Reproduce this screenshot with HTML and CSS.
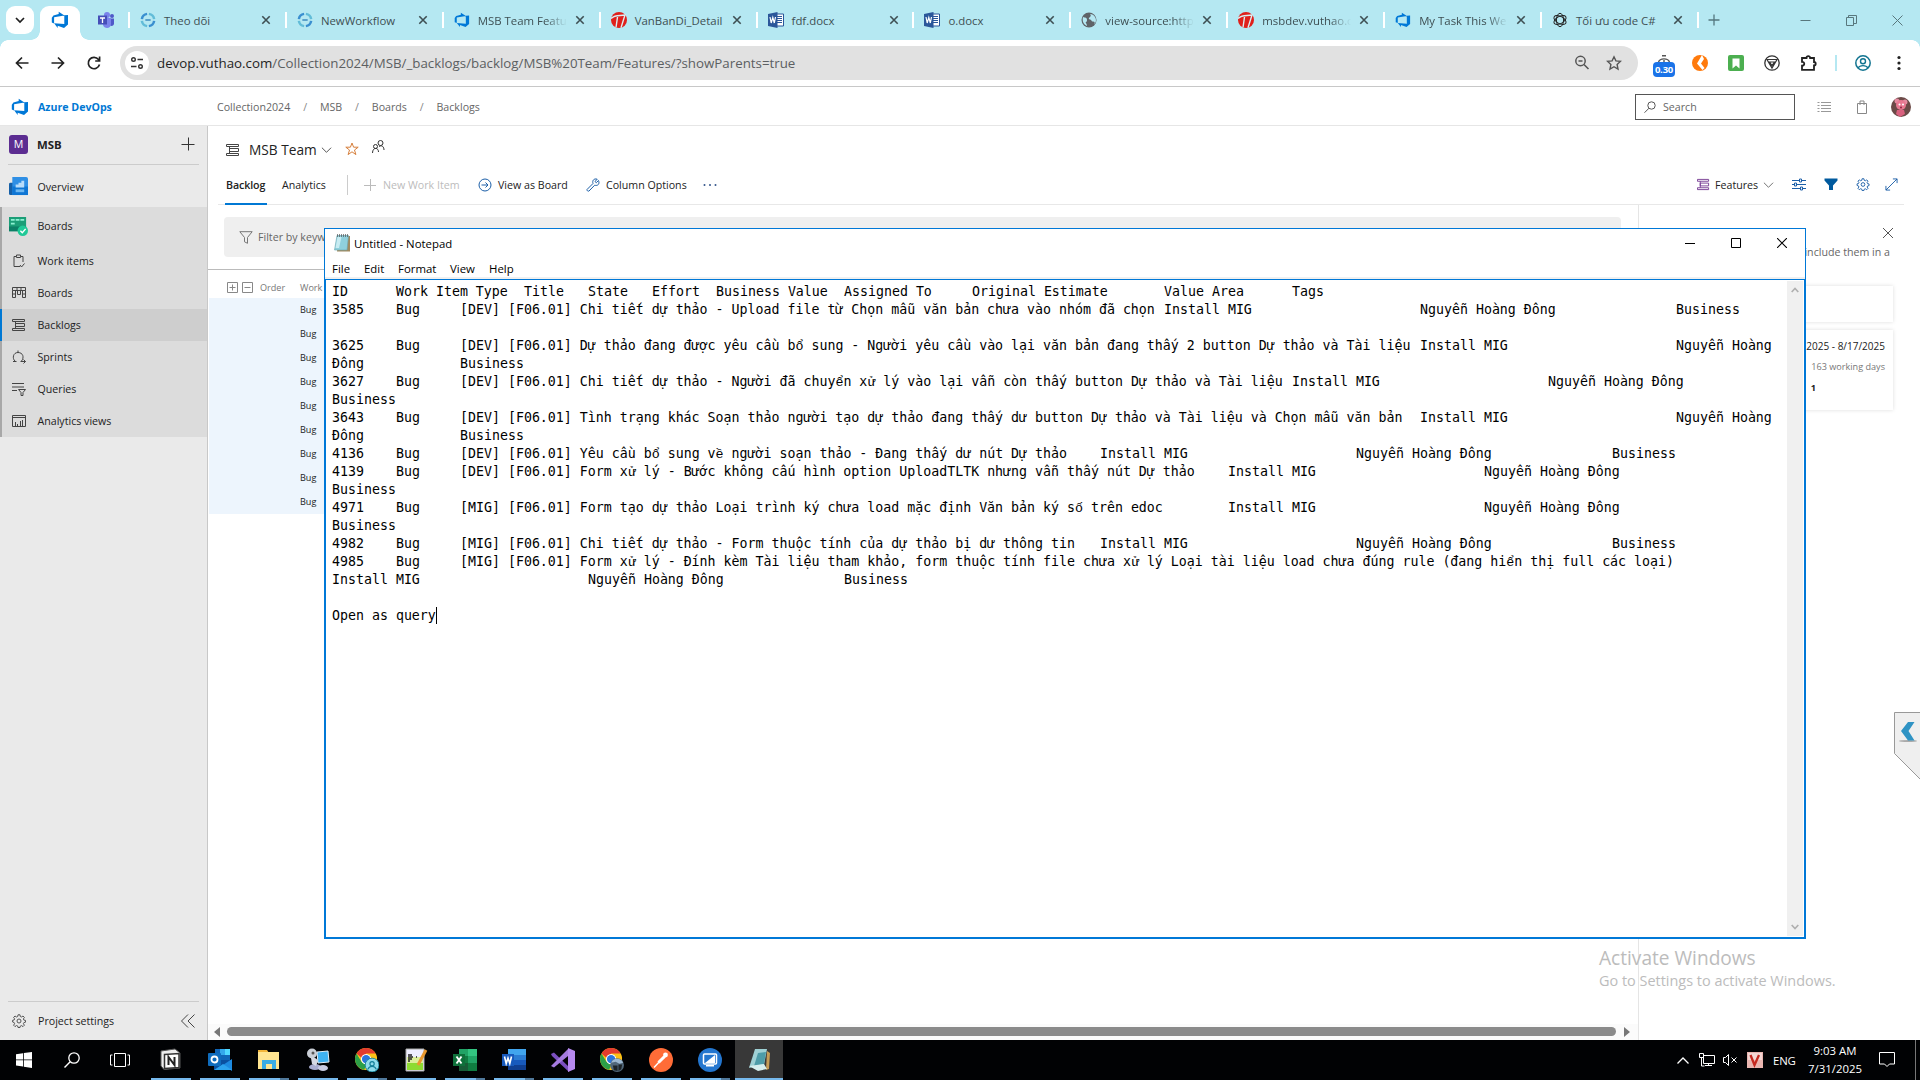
FILE: index.html
```html
<!DOCTYPE html>
<html lang="en">
<head>
<meta charset="utf-8">
<title>MSB Team Features Backlog - Boards</title>
<link rel="stylesheet" href="styles.css">
</head>
<body>
<svg class="defs" aria-hidden="true">
  <symbol id="devops" viewBox="0 0 18 18"><path fill="#0078d7" d="M17 3.9v9.7l-4 3.3-6.3-2.2v2.2L3.1 12.300l10.200.8V4.300L17 3.900zM13.400 4.400 7.700.8v2.300L2.400 4.600.8 6.700v4.800l2.300 1V6.300l10.300-1.900z"/></symbol>
  <symbol id="ring" viewBox="0 0 18 18"><g fill="none" stroke-width="2.800"><path stroke="#3a8fd0" d="M2.100 8A7 7 0 0 1 8 2.100M15.900 10A7 7 0 0 1 10 15.900"/><path stroke="#62bcd8" d="M10 2.100A7 7 0 0 1 15.900 8M8 15.900A7 7 0 0 1 2.100 10"/></g><path stroke="#2d7fb8" stroke-width="1.500" d="M6 9h6"/></symbol>
  <symbol id="redseven" viewBox="0 0 16 16"><circle cx="8" cy="8" r="8" fill="#e0201b"/><path d="M0 6.500C4 2.500 8 4 14 3L10 15.800M6.500 5 5 15.500" fill="none" stroke="#d9f0f4" stroke-width="1.400"/></symbol>
  <symbol id="docx" viewBox="0 0 16 16"><path fill="#fff" stroke="#2b579a" d="M8 2h7.500v12H8z"/><path stroke="#2b579a" d="M9 4.500h5M9 6.500h5M9 8.500h5M9 10.500h5"/><path fill="#2b579a" d="M0 2 9.500 0v16L0 14z"/><path d="m2 5 1.200 6L4.800 5.500 6.300 11 7.500 5" fill="none" stroke="#fff" stroke-width="1.200"/></symbol>
  <symbol id="globe" viewBox="0 0 16 16"><circle cx="8" cy="8" r="7.500" fill="#5f6368"/><path fill="#b5e8f2" d="M2 5c2 1 4 0 4 3s-2 1-1 3 1 2 1 3C2.500 12.500 1 9 2 5zm7-3c1 1 1 2 0 3S7 7 9 7.500s1 2 3 2 2 1 1 3c2-1.500 2.700-5 1-7.500C13 3 11 2 9 2z"/></symbol>
  <symbol id="gpt" viewBox="0 0 16 16"><g fill="none" stroke="#222"><ellipse cx="8" cy="8" rx="3.600" ry="6.700"/><ellipse cx="8" cy="8" rx="3.600" ry="6.700" transform="rotate(60 8 8)"/><ellipse cx="8" cy="8" rx="3.600" ry="6.700" transform="rotate(120 8 8)"/></g></symbol>
  <symbol id="x" viewBox="0 0 10 10"><path d="m1.300 1.300 7.400 7.400m0-7.400L1.300 8.700" fill="none" stroke="currentColor" stroke-width="1.600"/></symbol>
  <symbol id="thinx" viewBox="0 0 12 12"><path d="m1 1 10 10m0-10L1 11" fill="none" stroke="currentColor"/></symbol>
  <symbol id="backlog" viewBox="0 0 14 14"><path d="M.5 1.500h12v2H.5zM3.500 5.500h9v3h-9zM.5 10.500h12v2H.5zM3.500 3.500v7" fill="none" stroke="currentColor"/></symbol>
  <symbol id="gear" viewBox="0 0 14 14"><path d="m6 .8h2l.3 1.700 1.200.5L11 2l1.400 1.400-1 1.500.5 1.200 1.600.3v1.800l-1.600.4-.5 1.100 1 1.500L11 12.600l-1.500-1-1.200.5L8 13.500H6l-.3-1.500-1.200-.5-1.500 1.100-1.400-1.400 1-1.500-.5-1.200L.6 8V6.300l1.500-.3.500-1.200-1-1.400L3 2l1.500 1 1.200-.5z" fill="none" stroke="currentColor"/><circle cx="7" cy="7" r="2" fill="none" stroke="currentColor"/></symbol>
  <symbol id="chev" viewBox="0 0 12 8"><path d="m1 1.500 5 5 5-5" fill="none" stroke="currentColor"/></symbol>
  <symbol id="funnel" viewBox="0 0 14 13"><path d="M.8.700h12.400L8.500 6.500v5.800l-3-1.500V6.500z" fill="none" stroke="currentColor"/></symbol>
  <symbol id="chrome" viewBox="0 0 24 24"><circle cx="12" cy="12" r="12" fill="#fbc116"/><path fill="#e33b2e" d="M1.600 6a12 12 0 0 1 20.800 0H12v9z"/><path fill="#2c9f48" d="M1.600 6 7 15l5 3-2 5.800A12 12 0 0 1 1.600 6z"/><circle cx="12" cy="12" r="5.600" fill="#fff"/><circle cx="12" cy="12" r="4.500" fill="#2b75dd"/></symbol>
</svg>

<header class="strip">
  <button class="tabsearch"><svg viewBox="0 0 10 8"><path d="m1 2 4 4 4-4" fill="none" stroke="#1f1f1f" stroke-width="1.700"/></svg></button>
  <div class="tab-active"><svg class="i18"><use href="#devops"/></svg></div>
  <div class="tab-pinned"><svg viewBox="0 0 18 18" class="i18"><circle cx="10" cy="4" r="3" fill="#7b83eb"/><circle cx="15" cy="5" r="2" fill="#5059c9"/><path fill="#5059c9" d="M12 7.500h5v5c0 2-2 3-4 2z"/><path fill="#7b83eb" d="M6 7h8v6c0 5-7 5-8 1z"/><path fill="#464eb8" d="M1 4.500h9v9H1z"/><path d="M3 7h5M5.500 7v5" stroke="#fff" stroke-width="1.300"/></svg></div>
  <div class="tab"><svg><use href="#ring"/></svg><span>Theo dõi</span><svg class="x"><use href="#x"/></svg></div>
  <div class="tab"><svg><use href="#ring"/></svg><span>NewWorkflow</span><svg class="x"><use href="#x"/></svg></div>
  <div class="tab"><svg><use href="#devops"/></svg><span class="fade">MSB Team Featu</span><svg class="x"><use href="#x"/></svg></div>
  <div class="tab"><svg><use href="#redseven"/></svg><span>VanBanDi_Detail</span><svg class="x"><use href="#x"/></svg></div>
  <div class="tab"><svg><use href="#docx"/></svg><span>fdf.docx</span><svg class="x"><use href="#x"/></svg></div>
  <div class="tab"><svg><use href="#docx"/></svg><span>o.docx</span><svg class="x"><use href="#x"/></svg></div>
  <div class="tab"><svg><use href="#globe"/></svg><span class="fade">view-source:http</span><svg class="x"><use href="#x"/></svg></div>
  <div class="tab"><svg><use href="#redseven"/></svg><span class="fade">msbdev.vuthao.c</span><svg class="x"><use href="#x"/></svg></div>
  <div class="tab"><svg><use href="#devops"/></svg><span class="fade">My Task This We</span><svg class="x"><use href="#x"/></svg></div>
  <div class="tab"><svg><use href="#gpt"/></svg><span>Tối ưu code C#</span><svg class="x"><use href="#x"/></svg></div>
  <div class="newtab"><svg viewBox="0 0 12 12"><path d="M6 .5v11M.5 6h11" stroke="#54777f" stroke-width="1.300"/></svg></div>
  <div class="winctl">
    <svg viewBox="0 0 11 11"><path d="M.5 5.500h10" stroke="#58777d"/></svg>
    <svg viewBox="0 0 11 11"><path d="M.5 2.500h7v8h-7zM2.500 2V.5h8v8H8" fill="none" stroke="#58777d"/></svg>
    <svg viewBox="0 0 11 11"><path d="m.5.5 10 10m0-10-10 10" stroke="#58777d"/></svg>
  </div>
</header>

<div class="toolbar">
  <div class="navbtns">
    <svg viewBox="0 0 16 16"><path d="M14.500 8H3M8 2.500 2.500 8 8 13.500" fill="none" stroke="#222" stroke-width="1.700"/></svg>
    <svg viewBox="0 0 16 16"><path d="M1.500 8H13M8 2.500 13.500 8 8 13.500" fill="none" stroke="#222" stroke-width="1.700"/></svg>
    <svg viewBox="0 0 16 16"><path d="M13.500 9.500A5.700 5.700 0 1 1 12.500 4.500l1 1.500M13.600 1.500V6H9.200" fill="none" stroke="#222" stroke-width="1.700"/></svg>
  </div>
  <div class="omnibox">
    <div class="siteinfo"><svg viewBox="0 0 14 14"><path d="M7.500 3.500H13M1 10.500h5.500" stroke="#333" stroke-width="1.500"/><circle cx="3.500" cy="3.500" r="1.800" fill="none" stroke="#333" stroke-width="1.400"/><circle cx="10.500" cy="10.500" r="1.800" fill="none" stroke="#333" stroke-width="1.400"/></svg></div>
    <span class="url"><b>devop.vuthao.com</b>/Collection2024/MSB/_backlogs/backlog/MSB%20Team/Features/?showParents=true</span>
    <svg class="oi" viewBox="0 0 16 16"><circle cx="6.500" cy="6" r="4.700" fill="none" stroke="#555" stroke-width="1.500"/><path d="m10 9.500 4.500 4.500M4.500 6h4" stroke="#555" stroke-width="1.600"/></svg>
    <svg class="oi" viewBox="0 0 16 16"><path d="m8 1.800 1.900 4.100 4.500.5-3.300 3.100.9 4.500-4-2.300L4 14l.9-4.500L1.600 6.400l4.500-.5z" fill="none" stroke="#555" stroke-width="1.400"/></svg>
  </div>
  <div class="ext">
    <div class="timer"><svg viewBox="0 0 14 7"><path d="M1.500 7C3 2.800 11 2.800 12.500 7M5 .700h4M7 5v2" fill="none" stroke="#555" stroke-width="1.400"/></svg><span>0.30</span></div>
    <svg viewBox="0 0 16 16"><circle cx="8" cy="8" r="8" fill="#ff7a0c"/><path d="M10 0 5 8.500 10.500 15l2-2L9 8.500 12 4z" fill="#fff"/><path fill="#ff7a0c" d="m13 5-2 3.500 2 3z"/></svg>
    <svg viewBox="0 0 16 16"><rect width="16" height="16" rx="2" fill="#4caf50"/><path fill="#fff" d="M4.500 3.500h7v10L8 10.500l-3.500 3z"/></svg>
    <svg viewBox="0 0 16 16"><circle cx="8" cy="8" r="7.200" fill="none" stroke="#333" stroke-width="1.300"/><path d="M3 4.500h10L8 13zM5.500 7h5L8 10.500z" fill="none" stroke="#333" stroke-width="1.200"/></svg>
    <svg class="puzzle" viewBox="0 0 18 18"><path d="M2 4h4.500a1.800 1.800 0 0 1 3.600 0H14v4a1.700 1.700 0 0 1 0 3.400v4.500H2v-4.300c3 0 3-3.800 0-3.800z" fill="none" stroke="#222" stroke-width="1.800"/></svg>
    <i class="vsep"></i>
    <svg viewBox="0 0 16 16"><circle cx="8" cy="8" r="7.200" fill="none" stroke="#127490" stroke-width="1.500"/><circle cx="8" cy="6.300" r="2.500" fill="none" stroke="#127490" stroke-width="1.400"/><path d="M3 13c2-3.200 8-3.200 10 0" fill="none" stroke="#127490" stroke-width="1.400"/></svg>
    <svg viewBox="0 0 16 16"><g fill="#222"><circle cx="8" cy="2.500" r="1.600"/><circle cx="8" cy="8" r="1.600"/><circle cx="8" cy="13.500" r="1.600"/></g></svg>
  </div>
</div>

<div class="adohead">
  <svg class="i18"><use href="#devops"/></svg>
  <strong class="brand">Azure DevOps</strong>
  <nav class="crumbs"><span>Collection2024</span><i>/</i><span>MSB</span><i>/</i><span>Boards</span><i>/</i><span>Backlogs</span></nav>
  <div class="search"><svg viewBox="0 0 12 12"><circle cx="7.500" cy="4.500" r="3.700" fill="none" stroke="#555"/><path d="M5 7.200.5 11.700" stroke="#555"/></svg>Search</div>
  <svg class="hi" viewBox="0 0 14 12"><path d="M4 1.500h10M4 4.500h10M4 7.500h10M4 10.500h10M.5 1.500h2M.5 4.500h2M.5 7.500h2M.5 10.500h2" stroke="#999"/></svg>
  <svg class="hi bag" viewBox="0 0 12 14"><path d="M1.500 3.500h9v10h-9zM4 5V1h4v4" fill="none" stroke="#888"/></svg>
  <svg class="avatar" viewBox="0 0 20 20"><circle cx="10" cy="10" r="10" fill="#6b4a47"/><circle cx="6" cy="4" r="2.500" fill="#e58aa0"/><circle cx="14" cy="5" r="2.500" fill="#e58aa0"/><circle cx="10" cy="8" r="5" fill="#e87891"/><path fill="#d9607e" d="M6 13h7l1 4-5 3-4-3z"/><circle cx="8.500" cy="7.500" r="1" fill="#fff"/><circle cx="12" cy="7.500" r="1" fill="#fff"/><circle cx="10" cy="10.500" r="1" fill="#8c2840"/></svg>
</div>

<div class="work">
  <aside class="side">
    <div class="proj"><b class="badge">M</b><strong>MSB</strong><svg viewBox="0 0 14 14"><path d="M7.500.5v13M.5 7.500h13" stroke="#333"/></svg></div>
    <a class="item overview"><svg class="big" viewBox="0 0 20 20"><rect y="6" width="16" height="13" rx="1.500" fill="#1660a8"/><path fill="#2f8fe5" d="M3.500 0H18a2 2 0 0 1 2 2v17H3.500z"/><path fill="#0f76d4" d="M3.500 10H20v9H3.500z"/><path fill="#b8dcfa" d="M7 8h3V6h3V4h3v7H7z"/><path fill="#6db8f2" d="M7 13h9v3H7z"/></svg>Overview</a>
    <div class="group">
      <a class="item head"><svg class="big" viewBox="0 0 20 20"><path fill="#1b9e77" d="M0 0h18v15H0z"/><path fill="#0d7f66" d="M0 10h18v5H0z"/><path fill="#8df0d2" d="M2 2h4v2H2zM7 2h4v2H7zM12 2h4v2h-4zM2 6h4v2H2z"/><circle cx="14.500" cy="14.500" r="5.500" fill="#20c997"/><path d="m12 14.500 2 2 3.500-4" fill="none" stroke="#fff" stroke-width="1.500"/></svg>Boards</a>
      <a class="item"><svg viewBox="0 0 14 14"><path d="M8 12.500H2v-10h2.500V1h4v1.500H11V8M4.500 2.500v1h4v-1M8 11l1.500 2 3-3.500" fill="none" stroke="#444"/></svg>Work items</a>
      <a class="item"><svg viewBox="0 0 14 14"><path d="M.5 1.500h13v3H.5zM.5 4.500v7h3v-7M5.500 4.500v4h3v-4M10.500 4.500v7h3v-7M.5 8h3M10.500 8h3M5 1.500v3M9 1.500v3" fill="none" stroke="#444"/></svg>Boards</a>
      <a class="item on"><svg><use href="#backlog"/></svg>Backlogs</a>
      <a class="item"><svg viewBox="0 0 14 14"><path d="M3 11C0 8.500 1 2.500 6 2.500s6.500 5 3.500 8.500M6 .5v2M1 11.500h3.500M8.500 11.500h5M11.500 9.500l2 2-2 2" fill="none" stroke="#444"/></svg>Sprints</a>
      <a class="item"><svg viewBox="0 0 14 14"><path d="M0 1.500h12M0 5h12M0 8.500h5M6.500 7.500h7l-2.500 3v3h-2v-3z" fill="none" stroke="#444"/></svg>Queries</a>
      <a class="item"><svg viewBox="0 0 14 14"><path d="M.5 1.500h13v11H.5zM.5 3.500h13M3.500 12V8M5.500 12v-2M8.500 12V7M10.500 12V6" fill="none" stroke="#444"/></svg>Analytics views</a>
    </div>
    <div class="settings"><svg><use href="#gear"/></svg><span>Project settings</span><svg viewBox="0 0 14 14"><path d="M7 .5.500 7 7 13.500M13.500.5 7 7l6.500 6.500" fill="none" stroke="#444"/></svg></div>
  </aside>

  <main class="main">
    <div class="title"><svg class="i14"><use href="#backlog"/></svg><h1>MSB Team</h1><svg class="ch"><use href="#chev"/></svg>
      <svg class="star" viewBox="0 0 14 14"><path d="m7 1 1.600 4.200h4.600L9.500 8l1.400 4.600L7 9.800l-3.900 2.800L4.500 8 .8 5.200h4.600z" fill="none" stroke="#d67f3c"/></svg>
      <svg class="people" viewBox="0 0 14 14"><circle cx="9.500" cy="3" r="2.500" fill="none" stroke="#333"/><circle cx="4.500" cy="6.500" r="2" fill="none" stroke="#333"/><path d="M1.500 13c0-6 6-6 6-1M8 6.500c3-2 5 .5 5 3.500" fill="none" stroke="#333"/></svg>
    </div>
    <div class="tabs">
      <a class="t sel">Backlog</a><a class="t an">Analytics</a><i class="bar"></i>
      <a class="cmd c1"><svg viewBox="0 0 14 14"><path d="M7.500 1v12M1 7.500h12" stroke="#bbb"/></svg>New Work Item</a>
      <a class="cmd c2"><svg viewBox="0 0 14 14"><circle cx="7" cy="7" r="6" fill="none" stroke="#1c5fa8"/><path d="M3.500 7h6.500M7.500 4.500 10 7 7.500 9.500" fill="none" stroke="#1c5fa8"/></svg>View as Board</a>
      <a class="cmd c3"><svg viewBox="0 0 14 14"><path d="M12.500 2.500 10.300 4.700 9 3.500l2.200-2.300C8 .2 6 2.500 7 5.500L1 11.500c0 1.500 1 2 2 1.500l5.700-5.800c3 1 5.300-1.200 3.800-4.700z" fill="none" stroke="#1c5fa8"/></svg>Column Options</a>
      <a class="more"><svg viewBox="0 0 14 4"><g fill="#34568b"><circle cx="1.500" cy="2" r="1"/><circle cx="7" cy="2" r="1"/><circle cx="12.500" cy="2" r="1"/></g></svg></a>
      <div class="right">
        <svg class="i13 purple"><use href="#backlog"/></svg><span>Features</span><svg class="ch"><use href="#chev"/></svg>
        <svg class="i14b" viewBox="0 0 14 13"><path d="M0 2.500h7M10 2.500h4M0 6.500h2M5 6.500h9M0 10.500h8M11 10.500h3" stroke="#1c5fa8" stroke-width="1.200"/><path d="M7.500 1h2v3h-2zM2.500 5h2v3h-2zM8.500 9h2v3h-2z" fill="none" stroke="#1c5fa8"/></svg>
        <svg class="i14b" viewBox="0 0 14 13"><path fill="#005a9e" d="M.5.500h13v2L9 7.500V12L5 12V7.500L.5 2.500z"/></svg>
        <svg class="i14b"><use href="#gear"/></svg>
        <svg class="i14c" viewBox="0 0 14 14"><path d="M1 13 13 1M8.500 1H13v4.500M1 8.500V13h4.500" fill="none" stroke="#1c5fa8"/></svg>
      </div>
    </div>
    <div class="body">
      <section class="list">
        <div class="filter"><svg><use href="#funnel"/></svg>Filter by keyw</div>
        <div class="thead"><svg viewBox="0 0 11 11"><path d="M.5.500h10v10H.5zM5.500 2.500v6M2.500 5.500h6" fill="none" stroke="#888"/></svg><svg viewBox="0 0 11 11"><path d="M.5.500h10v10H.5zM2.500 5.500h6" fill="none" stroke="#888"/></svg><span class="ord">Order</span><span>Work</span></div>
        <div class="rows"><p>Bug</p><p>Bug</p><p>Bug</p><p>Bug</p><p>Bug</p><p>Bug</p><p>Bug</p><p>Bug</p><p>Bug</p></div>
        <div class="hscroll"><svg viewBox="0 0 6 10"><path d="M6 0v10L0 5z" fill="#777"/></svg><i></i><svg viewBox="0 0 6 10"><path d="M0 0v10l6-5z" fill="#777"/></svg></div>
      </section>
      <section class="panel">
        <svg class="px"><use href="#thinx"/></svg>
        <p class="hint">include them in a</p>
        <div class="card c-a"></div>
        <div class="card c-b"><p class="date">2025 - 8/17/2025</p><p class="days">163 working days</p><p class="one">1</p></div>
      </section>
    </div>
  </main>
</div>

<footer class="taskbar">
  <div class="tb"><svg viewBox="0 0 16 16" width="16" height="16"><path fill="#fff" d="M0 2.200 7 1.200v6.300H0zM7.800 1.100 16 0v7.500H7.800zM0 8.300h7v6.300l-7-1zM7.800 8.300H16V16l-8.200-1.200z"/></svg></div>
  <div class="tb"><svg viewBox="0 0 16 16" width="16" height="16"><circle cx="10" cy="6" r="5.200" fill="none" stroke="#fff" stroke-width="1.300"/><path d="M6.200 9.800.500 15.500" stroke="#fff" stroke-width="1.400"/></svg></div>
  <div class="tb"><svg viewBox="0 0 20 16" width="20" height="16"><path d="M4.500 1.500h11v13h-11zM2.500 3H.5v10h2M17.500 3h2v10h-2" fill="none" stroke="#fff"/></svg></div>
  <div class="apps">
    <div class="app"><svg viewBox="0 0 24 24"><path fill="#eee" stroke="#555" d="m2 3 14-2 5 4v15l-16 1.500L2 18z"/><path fill="#fff" stroke="#333" stroke-width="1.500" d="M5.500 6.500 20 5.500v14L5.500 20.500z"/><path d="M9.500 17V9l6 8V9" fill="none" stroke="#222" stroke-width="2"/></svg></div>
    <div class="app"><svg viewBox="0 0 24 24"><path fill="#1066b8" d="M7 1h15v12H7z"/><path fill="#34a8ec" d="M12 1h5v6h-5z"/><path fill="#50d9ff" d="M17 1h5v6h-5z"/><path fill="#0a50a0" d="M6 12h17v10H6z"/><path fill="#1d8ae0" d="m24 11-9 6 9 6z"/><path fill="#2ca3ee" d="m6 22 9-6 9 6z"/><rect y="5" width="13" height="13" rx="1" fill="#0f6cbd"/><circle cx="6.500" cy="11.500" r="3" fill="none" stroke="#fff" stroke-width="1.800"/></svg></div>
    <div class="app multi"><svg viewBox="0 0 24 24"><path fill="#f3b63a" d="M1 2h9l2 3H1z"/><path fill="#ffe591" d="M1 4h21v17H1z"/><path fill="#3aace4" d="M5 12h14v9h-4v-5H9v5H5z"/></svg></div>
    <div class="app"><svg viewBox="0 0 24 24"><ellipse cx="9" cy="19" rx="6" ry="3" fill="#a9add0"/><ellipse cx="17" cy="20" rx="5" ry="3" fill="#c9cce2"/><ellipse cx="6" cy="5.500" rx="5" ry="5" fill="#c9ced6"/><circle cx="7" cy="5" r="1.500" fill="#555"/><path fill="#d5d8e2" d="M5 10c3-1 6 0 7 3l-2 5-4-2z"/><path fill="#3fb2f2" stroke="#e3eef7" d="m11 4 11-1 1 11-11 1z"/></svg></div>
    <div class="app multi"><svg viewBox="0 0 26 26"><use href="#chrome" width="24" height="24"/><circle cx="18.500" cy="18.500" r="7.500" fill="#8fdcec" stroke="#14809a"/><circle cx="18.500" cy="17" r="2.300" fill="none" stroke="#14809a" stroke-width="1.300"/><path d="M14 23c2-4 7-4 9 0" fill="none" stroke="#14809a" stroke-width="1.300"/></svg></div>
    <div class="app"><svg viewBox="0 0 24 24"><path fill="#eef" stroke="#aaa" d="M2 1h18v22H2z"/><path fill="#8edb32" d="M3 14h16v8H3z"/><path fill="#dcef9a" d="M3 9h16v6H3z"/><path d="M5 6v8M8 9h1M12 9h1M7 6v6" stroke="#222" stroke-width="1.500"/><path stroke="#e9982f" stroke-width="3" d="M14 17 22 2"/></svg></div>
    <div class="app multi"><svg viewBox="0 0 24 24"><path fill="#21a366" d="M6 1h18v22H6z"/><path fill="#107c41" d="M6 8h9v7H6zM15 15h9v8h-9z"/><path fill="#33c481" d="M15 1h9v7h-9z"/><path fill="#185c37" d="M6 15h9v8H6z"/><path fill="#0f703b" d="M0 6h12v12H0z"/><path d="m3.500 8.500 5 7m0-7-5 7" stroke="#fff" stroke-width="1.900"/></svg></div>
    <div class="app multi"><svg viewBox="0 0 24 24"><path fill="#41a5ee" d="M6 1h18v6H6z"/><path fill="#2b7cd3" d="M6 7h18v5H6z"/><path fill="#185abd" d="M6 12h18v6H6z"/><path fill="#103f91" d="M6 17h18v5H6z"/><path fill="#185abd" d="M0 6h12v12H0z"/><path d="m2.500 8.500 1.700 7L6 10l1.800 5.500 1.700-7" fill="none" stroke="#fff" stroke-width="1.600"/></svg></div>
    <div class="app"><svg viewBox="0 0 24 24"><path fill="#7b4fc0" d="M0 6 3 4.500 18 19v5L1 8z"/><path fill="#a57be0" d="M0 18 17 1v7L3 19.500 0 18z"/><path fill="#b78af0" d="m17 0 7 3v18l-7 3z"/></svg></div>
    <div class="app"><svg viewBox="0 0 26 26"><use href="#chrome" width="24" height="24"/><circle cx="18.500" cy="18.500" r="7.500" fill="#51677a"/><path fill="#9db8d0" d="M12 16a7 7 0 0 1 13 0l-4 1-4-2z"/><path fill="#1d2428" d="M14 19h5v6l-4-1zM20 18h4l-1 5-3 2z"/></svg></div>
    <div class="app"><svg viewBox="0 0 24 24"><circle cx="12" cy="12" r="12" fill="#ff6c37"/><path d="M5 19.500 12 12l4-3" fill="none" stroke="#fff" stroke-width="1.500"/><path d="m9.500 14.500 6-6" stroke="#fff" stroke-width="3"/><circle cx="16.500" cy="7" r="2.400" fill="#fff"/></svg></div>
    <div class="app multi"><svg viewBox="0 0 24 24"><circle cx="12" cy="12" r="12" fill="#2376cf"/><rect x="5.500" y="6" width="13" height="10" rx="1" fill="none" stroke="#fff" stroke-width="1.500"/><path fill="#fff" d="m7 15 10-8v8zM8 17h8v1.500H8z"/></svg></div>
    <div class="app focus"><svg viewBox="0 0 24 24"><path fill="#c59b55" d="m20 3 3 2-1 16-3 1z"/><path fill="#9ed0d4" d="M8 1h12l-3 16-15 3z"/><path fill="#4d9ca8" d="m11 5 8-1-2 12-10 2z"/><path fill="#d6eeee" d="m2 18 15-2 3 5-9 2z"/></svg></div>
  </div>
  <div class="tray">
    <svg class="s1" viewBox="0 0 12 7"><path d="m.5 6.500 5.500-5.500 5.500 5.500" fill="none" stroke="#fff" stroke-width="1.300"/></svg>
    <svg class="s2" viewBox="0 0 16 14"><path d="M4.500 2.500h11v8h-11zM6 12.500h7M9.500 11v1.500M.5.500h4v4h-4zM2.500 5v8h3" fill="none" stroke="#fff"/></svg>
    <svg class="s3" viewBox="0 0 14 12"><path d="M.5 3.500h2L5.500.500v11l-3-3h-2zM8.500 3.500l5 5m0-5-5 5" fill="none" stroke="#fff"/></svg>
    <svg class="s4" viewBox="0 0 16 16"><path fill="#e9b5b0" d="M0 0h16v16H0z"/><path fill="#fff" fill-opacity=".45" d="M1 1h14v7H1z"/><path d="m3.500 3 4 10 4.500-10" fill="none" stroke="#c4281f" stroke-width="2.300"/></svg>
    <span class="lang">ENG</span>
    <div class="clock"><span>9:03 AM</span><span>7/31/2025</span></div>
    <svg class="s5" viewBox="0 0 16 16"><path d="M.5.500h15v11.500h-5L8 14.500 5.500 12h-5z" fill="none" stroke="#fff"/></svg>
    <i class="desk"></i>
  </div>
</footer>

<div class="watermark"><p class="w1">Activate Windows</p><p class="w2">Go to Settings to activate Windows.</p></div>

<svg class="slider" viewBox="0 0 26 68"><path d="M.5.500H27V68L.5 41.500z" fill="#efefef" stroke="#999"/><ellipse cx="14" cy="29" rx="9" ry="1" fill="#aaa"/><path d="M14 10h6.500l-6 9 6 9.500H14L7 19z" fill="#2f93c4"/></svg>

<section class="notepad">
  <div class="ncap"><svg class="nicon" viewBox="0 0 16 18"><path fill="#a08a60" d="M4 2h12v15.500H3z"/><path fill="#8fd0dc" stroke="#6aa5b0" stroke-width=".6" d="M3 1.500h11.500L13 16H.5z"/><path fill="#c8ecf2" d="M3.500 3h4L5 14H1.500z"/><path d="M3.500 0v3M5.500 0v3M7.500 0v3M9.500 0v3M11.500 0v3M13.500 0v3" stroke="#555" stroke-width=".7"/></svg><span>Untitled - Notepad</span>
    <div class="nctl"><svg viewBox="0 0 10 10"><path d="M0 5.500h10" stroke="#000"/></svg><svg viewBox="0 0 10 10"><path d="M.5.500h9v9h-9z" fill="none" stroke="#000"/></svg><svg viewBox="0 0 10 10"><path d="m0 0 10 10m0-10L0 10" stroke="#000" stroke-width="1.100"/></svg></div>
  </div>
  <div class="nmenu"><span class="m1">File</span><span class="m2">Edit</span><span class="m3">Format</span><span class="m4">View</span><span>Help</span></div>
  <div class="nbody">
<pre>ID	Work Item Type	Title	State	Effort	Business Value	Assigned To	Original Estimate	Value Area	Tags
3585	Bug	[DEV] [F06.01] Chi tiết dự thảo - Upload file từ Chọn mẫu văn bản chưa vào nhóm đã chọn	Install MIG			Nguyễn Hoàng Đông		Business

3625	Bug	[DEV] [F06.01] Dự thảo đang được yêu cầu b<b>ổ</b> sung - Người yêu cầu vào lại văn bản đang thấy 2 button Dự thảo và Tài liệu	Install MIG			Nguyễn Hoàng
Đông		Business
3627	Bug	[DEV] [F06.01] Chi tiết dự thảo - Người đã chuy<b>ể</b>n x<b>ử</b> lý vào lại vẫn còn thấy button Dự thảo và Tài liệu	Install MIG			Nguyễn Hoàng Đông
Business
3643	Bug	[DEV] [F06.01] Tình trạng khác Soạn thảo người tạo dự thảo đang thấy dư button Dự thảo và Tài liệu và Chọn mẫu văn bản	Install MIG			Nguyễn Hoàng
Đông		Business
4136	Bug	[DEV] [F06.01] Yêu cầu b<b>ổ</b> sung v<b>ề</b> người soạn thảo - Đang thấy dư nút Dự thảo	Install MIG			Nguyễn Hoàng Đông		Business
4139	Bug	[DEV] [F06.01] Form x<b>ử</b> lý - Bước không cấu hình option UploadTLTK nhưng vẫn thấy nút Dự thảo	Install MIG			Nguyễn Hoàng Đông
Business
4971	Bug	[MIG] [F06.01] Form tạo dự thảo Loại trình ký chưa load mặc định Văn bản ký s<b>ố</b> trên edoc	Install MIG			Nguyễn Hoàng Đông
Business
4982	Bug	[MIG] [F06.01] Chi tiết dự thảo - Form thuộc tính của dự thảo bị dư thông tin	Install MIG			Nguyễn Hoàng Đông		Business
4985	Bug	[MIG] [F06.01] Form x<b>ử</b> lý - Đính kèm Tài liệu tham khảo, form thuộc tính file chưa x<b>ử</b> lý Loại tài liệu load chưa đúng rule (đang hi<b>ể</b>n thị full các loại)
Install MIG			Nguyễn Hoàng Đông		Business

Open as query<i class="caret"></i></pre>
    <div class="vscroll"><svg viewBox="0 0 8 6"><path d="m.7 5 3.300-3.500L7.300 5" fill="none" stroke="#b0b0b0" stroke-width="1.700"/></svg><svg viewBox="0 0 8 6"><path d="m.7 1 3.300 3.500L7.300 1" fill="none" stroke="#b0b0b0" stroke-width="1.700"/></svg></div>
  </div>
</section>
</body>
</html>
```
FILE: styles.css
```css
* { box-sizing: border-box; }
body { margin: 0; width: 1920px; height: 1080px; overflow: hidden; position: relative; display: flex; flex-direction: column; background: #fff; font-family: "Open Sans", "Noto Sans", sans-serif; font-size: 10.65px; color: #222; white-space: nowrap; }
p, h1, pre { margin: 0; }
i { font-style: normal; }
svg { display: block; flex: none; }
.defs { position: absolute; width: 0; height: 0; }
.i18 { width: 18px; height: 18px; }
.i14 { width: 14px; height: 14px; }

/* browser tab strip */
.strip { height: 40px; flex: none; background: #b5e8f2; display: flex; align-items: center; padding-left: 6px; }
.tabsearch { width: 28px; height: 28px; border: 0; border-radius: 9px; background: #fff; padding: 0; display: flex; align-items: center; justify-content: center; }
.tabsearch svg { width: 10px; height: 8px; }
.tab-active { width: 40px; height: 34px; margin: 6px 0 0 6px; background: #fff; border-radius: 9px 9px 0 0; display: flex; justify-content: center; padding-top: 5px; position: relative; }
.tab-active::before, .tab-active::after { content: ""; position: absolute; bottom: 0; width: 9px; height: 9px; }
.tab-active::before { left: -9px; background: radial-gradient(circle at 0 0, transparent 8.5px, #fff 9px); }
.tab-active::after { right: -9px; background: radial-gradient(circle at 100% 0, transparent 8.5px, #fff 9px); }
.tab-pinned { width: 48px; display: flex; justify-content: center; padding-left: 4px; }
.tab { width: 156.9px; height: 16px; border-left: 2px solid #fff; display: flex; align-items: center; padding-left: 10px; font-size: 11.4px; color: #3e4f53; }
.tab > svg { width: 16px; height: 16px; }
.tab span { width: 89px; margin-left: 8px; }
.fade { -webkit-mask-image: linear-gradient(90deg, #000 68px, transparent 89px); mask-image: linear-gradient(90deg, #000 68px, transparent 89px); }
.tab .x { width: 10px; height: 10px; margin-left: 8px; }
.newtab { border-left: 2px solid #fff; height: 16px; display: flex; align-items: center; padding-left: 9px; }
.newtab svg { width: 12px; height: 12px; }
.winctl { margin-left: auto; display: flex; gap: 35px; padding-right: 17px; }
.winctl svg { width: 11px; height: 11px; }

/* address bar */
.toolbar { height: 47px; flex: none; border-bottom: 1px solid #c8c8c8; background: radial-gradient(circle at 8px 8px, #fff 7.5px, #b5e8f2 8px) 0 0 / 8px 8px no-repeat, radial-gradient(circle at 0 8px, #fff 7.5px, #b5e8f2 8px) 100% 0 / 8px 8px no-repeat, #fff; display: flex; align-items: center; }
.navbtns { display: flex; gap: 20px; padding-left: 14px; width: 120px; }
.navbtns svg { width: 16px; height: 16px; }
.omnibox { width: 1518px; height: 34px; border-radius: 17px; background: #e1e1e1; display: flex; align-items: center; padding: 0 16px 0 5px; }
.siteinfo { width: 24px; height: 24px; border-radius: 50%; background: #fff; display: flex; align-items: center; justify-content: center; }
.siteinfo svg { width: 14px; height: 14px; }
.url { margin-left: 8px; font-size: 13.32px; color: #5c5f62; flex: 1; }
.url b { font-weight: 400; color: #1f1f1f; }
.oi { width: 16px; height: 16px; margin-left: 16px; }
.ext { display: flex; align-items: center; gap: 20px; padding-left: 15px; }
.ext > svg { width: 16px; height: 16px; }
.ext .puzzle { width: 18px; height: 18px; margin: 0 -1px 0 0; }
.timer { width: 22px; height: 32px; margin-right: -3px; padding-top: 8px; display: flex; flex-direction: column; align-items: center; }
.timer svg { width: 14px; height: 7px; }
.timer span { width: 22px; height: 15px; line-height: 15px; border-radius: 4px; background: #1a73e8; color: #fff; font-size: 9.500px; font-weight: 700; letter-spacing: -.2px; text-align: center; }
.vsep { width: 2px; height: 16px; background: #b5e8f2; margin: 0 -2px; }

/* product header */
.adohead { height: 39px; flex: none; border-bottom: 1px solid #e6e6e6; display: flex; align-items: center; padding: 2px 9px 0 11px; }
.brand { width: 178px; padding-left: 9px; color: #0078d4; font-weight: 700; letter-spacing: -.02px; }
.crumbs { display: flex; width: 1428px; padding-left: 10px; color: #666; }
.crumbs i { width: 29.6px; text-align: center; color: #888; }
.search { width: 160px; height: 26px; border: 1px solid #555; display: flex; align-items: center; gap: 7px; padding-left: 8px; color: #666; }
.search svg { width: 12px; height: 12px; }
.hi { width: 14px; height: 12px; margin-left: 22px; }
.bag { width: 12px; height: 14px; margin-left: 25px; }
.avatar { width: 20px; height: 20px; margin-left: auto; }

/* navigation */
.work { flex: 1; display: flex; min-height: 0; }
.side { width: 208px; background: #eaeaea; border-right: 1px solid #c8c8c8; display: flex; flex-direction: column; }
.proj { height: 39px; margin: 0 8px; border-bottom: 1px solid #ccc; display: flex; align-items: center; padding: 0 4px 2px 1px; }
.badge { width: 19px; height: 19px; border-radius: 3px; background: #5c2d91; color: #fff; font-weight: 400; line-height: 19px; text-align: center; }
.proj strong { flex: 1; padding-left: 9px; font-size: 11.4px; }
.proj svg { width: 14px; height: 14px; }
.item { height: 32px; display: flex; align-items: center; padding-left: 10px; border-left: 2px solid #a8a8a8; }
.item svg { width: 14px; height: 14px; margin-right: 11.5px; color: #444; }
.item .big { width: 19px; height: 19px; margin-right: 9.5px; }
.overview { height: 42px; border-color: transparent; padding: 1px 0 0 7px; }
.group { background: #dcdcdc; }
.head { height: 38px; padding-left: 7px; }
.on { background: #cecece; border-color: #0078d4; }
.settings { margin: auto 8px 0; height: 39px; border-top: 1px solid #ccc; display: flex; align-items: center; padding: 0 4px; }
.settings span { flex: 1; padding-left: 12px; }
.settings svg { width: 14px; height: 14px; color: #555; }

.main { flex: 1; display: flex; flex-direction: column; min-width: 0; }
.title { height: 46px; display: flex; align-items: center; padding: 1px 0 0 18px; color: #222; }
.title h1 { font-size: 13.7px; font-weight: 400; width: 81px; padding-left: 9px; }
.i14, .title svg { color: #444; }
.ch { width: 11px; height: 8px; color: #666; }
.star { width: 14px; height: 14px; margin: -2px 0 0 13px; }
.people { width: 14px; height: 14px; margin: -5px 0 0 12px; }
.tabs { height: 33px; margin: 0 16px 0 10px; border-bottom: 1px solid #e8e8e8; display: flex; align-items: center; padding-left: 7px; }
.t { height: 33px; line-height: 26px; width: 42px; padding-left: 1px; }
.sel { border-bottom: 2px solid #0078d4; font-weight: 600; letter-spacing: -.1px; }
.an { width: 44px; margin-left: 14px; }
.bar { width: 1px; height: 20px; background: #ccc; margin: -6px 0 0 22px; }
.cmd, .more, .right { display: flex; align-items: center; margin-top: -7px; }
.cmd svg { width: 14px; height: 14px; margin-right: 6px; }
.c1 { color: #bcbcbc; width: 115px; margin-left: 15px; }
.c2 { width: 108px; }
.c3 { width: 117px; }
.more svg { width: 14px; height: 4px; }
.right { margin-left: auto; }
.i13 { width: 13px; height: 13px; }
.purple { color: #773b93; }
.right span { width: 42px; margin: 0 6px 0 5px; }
.i14b { width: 14px; height: 13px; margin-left: 18px; color: #1c5fa8; }
.i14c { width: 13px; height: 13px; margin: 0 6px 0 15px; }
.body { flex: 1; display: flex; }
.list { width: 1430px; display: flex; flex-direction: column; }
.filter { height: 40px; margin: 12px 17px 0 16px; background: #efefef; border-radius: 4px; display: flex; align-items: center; padding-left: 15px; gap: 5px; color: #666; }
.filter svg { width: 14px; height: 13px; color: #777; }
.thead { height: 29px; margin-top: 12px; border-top: 1px solid #bbb; display: flex; align-items: center; padding: 6px 0 0 19px; font-size: 9.1px; color: #777; }
.thead svg { width: 11px; height: 11px; margin-right: 4px; }
.ord { width: 43px; padding-left: 3px; }
.rows { background: #edf5fd; margin-left: 1px; font-size: 9.100px; }
.rows p { height: 24px; line-height: 23px; padding-left: 91px; }
.hscroll { margin-top: auto; height: 16px; background: #fbfbfb; display: flex; align-items: center; gap: 8px; padding: 0 8px 1px 6px; }
.hscroll svg { width: 6px; height: 10px; }
.hscroll i { flex: 1; height: 9px; border-radius: 5px; background: #8b8b8b; margin: 0 0 0 -1px; }
.panel { flex: 1; border-left: 1px solid #e5e5e5; display: flex; flex-direction: column; padding-right: 27px; }
.px { width: 12px; height: 12px; margin: 22px -1px 0 0; align-self: flex-end; color: #555; }
.hint { text-align: right; line-height: 16px; margin: 5px 3px 0 0; color: #666; }
.card { margin-left: 16px; background: #fff; box-shadow: 0 0 4px #ddd; }
.c-a { height: 36px; margin-top: 26px; }
.c-b { height: 80px; margin-top: 8px; padding: 7px 8px 0; font-size: 9.100px; text-align: right; }
.c-b p { height: 21px; line-height: 18px; }
.c-b .date { font-size: 10px; }
.days { color: #777; }
.one { font-weight: 700; padding-right: 69px; }

/* desktop taskbar */
.taskbar { height: 40px; flex: none; background: #010204; color: #fff; display: flex; }
.tb { width: 48px; display: flex; align-items: center; justify-content: center; }
.apps { display: flex; gap: 9px; margin-left: 7px; }
.app { width: 40px; border-bottom: 2px solid #76b9ed; display: flex; align-items: center; justify-content: center; position: relative; }
.app svg { width: 24px; height: 24px; margin-top: 2px; }
.multi::after { content: ""; position: absolute; right: 0; bottom: -2px; width: 9px; height: 2px; background: #50799c; }
.focus { width: 48px; margin-left: -4px; background: #383838; }
.tray { margin-left: auto; display: flex; align-items: center; font-size: 11.4px; }
.s1 { width: 12px; height: 7px; }
.s2 { width: 16px; height: 14px; margin-left: 10px; }
.s3 { width: 14px; height: 12px; margin-left: 8px; }
.s4 { width: 16px; height: 16px; margin-left: 10px; }
.lang { width: 24px; margin-left: 10px; letter-spacing: -.2px; }
.clock { width: 66px; margin: -1px 0 0 5px; display: flex; flex-direction: column; line-height: 18px; text-align: center; }
.s5 { width: 16px; height: 16px; margin: 0 20px 0 11px; }
.desk { width: 5px; height: 40px; border-left: 1px solid #777; }

.watermark { position: absolute; left: 1599px; top: 944px; color: #bcbcbc; }
.w1 { font-size: 19.100px; line-height: 28px; }
.w2 { font-size: 14.450px; line-height: 18px; }
.slider { position: absolute; left: 1894px; top: 712px; width: 26px; height: 68px; }

/* editor window over the browser */
.notepad { position: absolute; left: 324px; top: 228px; width: 1482px; height: 711px; background: #fff; border: 1px solid #0078d7; display: flex; flex-direction: column; color: #000; font-size: 11.4px; }
.ncap { height: 30px; display: flex; align-items: center; padding: 0 0 2px 9px; }
.nicon { width: 16px; height: 18px; }
.ncap span { margin-left: 4px; flex: 1; }
.nctl { display: flex; gap: 36px; padding-right: 18px; }
.nctl svg { width: 10px; height: 10px; }
.nmenu { height: 20px; display: flex; align-items: center; padding-left: 7px; border-bottom: 2px solid #f0f0f0; }
.m1 { width: 32px; }
.m2 { width: 34px; }
.m3 { width: 52px; }
.m4 { width: 39px; }
.nbody { flex: 1; min-height: 0; border: 1px solid #0078d7; display: flex; padding: 1px 1px 1px 0; }
pre { flex: 1; min-width: 0; padding: 2px 0 0 6px; font-family: "DejaVu Sans Mono", "Liberation Mono", monospace; font-size: 13.289px; line-height: 18px; tab-size: 64px; }
pre b { font: 13.33px/1 "Liberation Mono", monospace; }
.caret { display: inline-block; width: 1px; height: 17px; background: #000; vertical-align: -4px; }
.vscroll { width: 16px; background: #f0f0f0; display: flex; flex-direction: column; justify-content: space-between; align-items: center; padding: 6px 0; }
.vscroll svg { width: 8px; height: 6px; }
```
